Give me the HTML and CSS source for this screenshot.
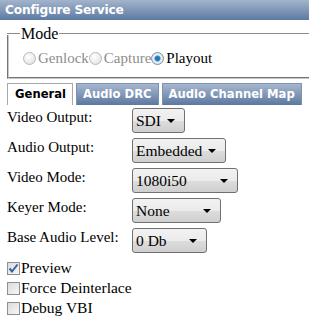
FILE: index.html
```html
<!DOCTYPE html>
<html>
<head>
<meta charset="utf-8">
<link rel="stylesheet" href="styles.css">
</head>
<body>
<div class="header">Configure Service</div>
<div class="mode-title"><span class="rule short"></span><span class="legend">Mode</span><span class="rule long"></span></div>
<div class="mode">
  <div class="radios">
    <span class="radio disabled"><span class="dot"></span>Genlock</span>
    <span class="radio disabled"><span class="dot"></span>Capture</span>
    <span class="radio checked"><span class="dot"></span>Playout</span>
  </div>
</div>
<div class="tabs">
  <div class="tab active">General</div>
  <div class="tab">Audio DRC</div>
  <div class="tab">Audio Channel Map</div>
</div>
<div class="form">
  <div class="row"><span class="label">Video Output:</span><span class="select w-sdi">SDI</span></div>
  <div class="row"><span class="label">Audio Output:</span><span class="select w-emb">Embedded</span></div>
  <div class="row"><span class="label">Video Mode:</span><span class="select w-mode">1080i50</span></div>
  <div class="row"><span class="label">Keyer Mode:</span><span class="select w-none">None</span></div>
  <div class="row"><span class="label">Base Audio Level:</span><span class="select w-db">0 Db</span></div>
</div>
<div class="checks">
  <div class="check on"><span class="box"><svg width="11" height="11" viewBox="0 0 11 11"><path d="M1.5 5.5 L4 8.5 L9.5 1.5" fill="none" stroke="#3b5ea8" stroke-width="2"/></svg></span>Preview</div>
  <div class="check"><span class="box"></span>Force Deinterlace</div>
  <div class="check"><span class="box"></span>Debug VBI</div>
</div>
</body>
</html>
```
FILE: styles.css
```css
html, body {
  margin: 0;
  padding: 0;
  overflow: hidden;
  background: #fff;
}
body {
  font-family: "Liberation Serif", "Times New Roman", serif;
  font-size: 15px;
  color: #000;
  width: 309px;
}
.header {
  height: 20px;
  line-height: 20px;
  padding-left: 5px;
  background: linear-gradient(#a3b4cc, #5d7aa2);
  color: #fff;
  font-family: "DejaVu Sans", Verdana, sans-serif;
  font-weight: bold;
  font-size: 12.2px;
  letter-spacing: -0.2px;
}
.mode-title {
  display: flex;
  align-items: center;
  height: 18px;
  margin: 5px 0 0 7px;
}
.rule {
  display: block;
  height: 0;
  border-top: 1px solid #8c8c8c;
  border-bottom: 1px solid #ffffff;
}
.rule.short {
  flex: 0 0 13px;
}
.rule.long {
  flex: 1 1 0;
}
.legend {
  font-size: 16px;
  line-height: 18px;
  padding: 0 1px;
}
.mode {
  margin: -9px 0 0 7px;
  border-left: 2px groove #c8c8c8;
  border-bottom: 2px groove #c8c8c8;
  padding: 15px 0 9px 14px;
}
.radios {
  display: flex;
  align-items: center;
  height: 19px;
}
.radio {
  display: flex;
  align-items: center;
}
.radio.disabled {
  color: #8d8d8d;
}
.dot {
  width: 11px;
  height: 11px;
  border-radius: 50%;
  border: 1px solid #b9b9b9;
  background: radial-gradient(circle at 40% 35%, #ffffff, #dcdcdc);
  margin: 0 2px 0 0;
  box-sizing: content-box;
}
.radio.checked .dot {
  border-color: #7e8fa3;
  background: radial-gradient(circle, #1a6cb0 0, #2b88c8 2.5px, #e8eef4 3.5px, #dde3ea 6px);
}
.tabs {
  display: flex;
  gap: 3px;
  margin: 4px 0 0 7px;
  height: 22px;
  align-items: flex-end;
}
.tab {
  height: 22px;
  line-height: 21px;
  box-sizing: border-box;
  padding: 0 6px;
  font-family: "DejaVu Sans", Verdana, sans-serif;
  font-weight: bold;
  font-size: 11.6px;
  color: #fff;
  background: linear-gradient(#a6b7cf, #5c78a0);
  border: 1px solid #7f92ad;
  border-bottom: none;
  white-space: nowrap;
}
.tab.active {
  background: #fff;
  color: #000;
  border: 1px solid #a8a8a8;
  border-bottom: none;
  padding: 0 6px 0 7px;
}
.form {
  margin: 3px 0 0 7px;
}
.row {
  display: flex;
  align-items: flex-start;
  height: 30px;
}
.label {
  width: 125px;
  line-height: 18px;
}
.select {
  position: relative;
  height: 25px;
  box-sizing: border-box;
  border: 1px solid #707070;
  border-radius: 3px;
  background: linear-gradient(#f2f2f2 0%, #ebebeb 50%, #dddddd 51%, #cfcfcf 100%);
  padding-left: 3px;
  line-height: 24px;
  font-size: 15.5px;
}
.select::after {
  content: "";
  position: absolute;
  right: 9px;
  top: 10px;
  border-left: 4px solid transparent;
  border-right: 4px solid transparent;
  border-top: 4px solid #000;
}
.w-sdi { width: 53px; }
.w-emb { width: 94px; }
.w-mode { width: 106px; }
.w-none { width: 89px; }
.w-db { width: 75px; }
.checks {
  margin: 0 0 0 7px;
}
.check {
  display: flex;
  align-items: center;
  height: 20px;
  font-size: 15.5px;
}
.box {
  width: 11px;
  height: 11px;
  border: 1px solid #8f8f8f;
  background: linear-gradient(135deg, #dcdcdc, #f6f6f6);
  margin-right: 1px;
  display: flex;
  align-items: center;
  justify-content: center;
}
.box svg {
  display: block;
}
```
